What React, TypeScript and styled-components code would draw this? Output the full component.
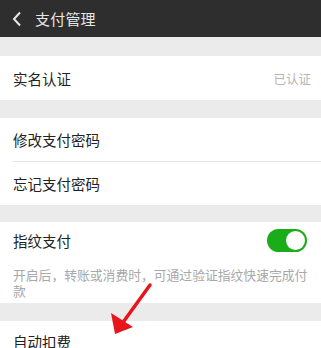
import React, { useState } from "react";
import styled, { createGlobalStyle } from "styled-components";

const Global = createGlobalStyle`
  html, body { margin: 0; padding: 0; background: #ebebeb; }
  body { font-family: "Noto Sans CJK SC", "Noto Sans", sans-serif; }
  * { box-sizing: border-box; }
`;

const Page = styled.div`
  position: relative;
  width: 321px;
  height: 348px;
  overflow: hidden;
  background: #ebebeb;
  display: flex;
  flex-direction: column;
`;

const Header = styled.div`
  height: 37px;
  background: #2e2e2e;
  display: flex;
  align-items: center;
  padding-left: 12px;
  gap: 13px;
  flex-shrink: 0;
`;

const Title = styled.span`
  color: #e6e6e6;
  font-size: 15px;
  letter-spacing: 0.2px;
`;

const Gap = styled.div<{ $h: number }>`
  height: ${(p) => p.$h}px;
  flex-shrink: 0;
`;

const Group = styled.div<{ $fill?: boolean }>`
  background: #ffffff;
  display: flex;
  flex-direction: column;
  flex: ${(p) => (p.$fill ? 1 : "none")};
`;

const Row = styled.div<{ $h: number; $sep?: boolean }>`
  height: ${(p) => p.$h}px;
  display: flex;
  align-items: center;
  justify-content: space-between;
  margin-left: 13px;
  padding-right: 10px;
  border-top: ${(p) => (p.$sep ? "1px solid #e3e3e3" : "none")};
  flex-shrink: 0;
`;

const Label = styled.span`
  color: #222222;
  font-size: 14.5px;
`;

const Value = styled.span`
  color: #b5b5b5;
  font-size: 12.5px;
`;

const Desc = styled.div`
  padding: 9px 10px 4px 13px;
  color: #a8a8a8;
  font-size: 12.8px;
  line-height: 16px;
`;

const Toggle = styled.button<{ $on: boolean }>`
  width: 40px;
  height: 23px;
  border-radius: 12px;
  border: none;
  padding: 2px;
  background: ${(p) => (p.$on ? "#1aad19" : "#dddddd")};
  display: flex;
  justify-content: ${(p) => (p.$on ? "flex-end" : "flex-start")};
  margin-right: 4px;
  cursor: pointer;
`;

const Knob = styled.span`
  width: 19px;
  height: 19px;
  border-radius: 50%;
  background: #ffffff;
`;

const Arrow = styled.svg`
  position: absolute;
  left: 0;
  top: 0;
  pointer-events: none;
`;

export default function App() {
  const [on, setOn] = useState(true);
  return (
    <>
      <Global />
      <Page>
        <Header>
          <svg width="10" height="16" viewBox="0 0 10 16">
            <path d="M8 1.5 L2 8 L8 14.5" fill="none" stroke="#e6e6e6" strokeWidth="2" />
          </svg>
          <Title>支付管理</Title>
        </Header>
        <Gap $h={19} />
        <Group>
          <Row $h={44}>
            <Label>实名认证</Label>
            <Value>已认证</Value>
          </Row>
        </Group>
        <Gap $h={18} />
        <Group>
          <Row $h={43}>
            <Label>修改支付密码</Label>
          </Row>
          <Row $h={44} $sep>
            <Label>忘记支付密码</Label>
          </Row>
        </Group>
        <Gap $h={17} />
        <Group>
          <Row $h={36}>
            <Label>指纹支付</Label>
            <Toggle $on={on} onClick={() => setOn(!on)}>
              <Knob />
            </Toggle>
          </Row>
          <Desc>开启后，转账或消费时，可通过验证指纹快速完成付款</Desc>
        </Group>
        <Gap $h={18} />
        <Group $fill>
          <Row $h={40}>
            <Label>自动扣费</Label>
          </Row>
        </Group>
        <Arrow width="321" height="348" viewBox="0 0 321 348">
          <line x1="150" y1="285" x2="124" y2="321" stroke="#e8161c" strokeWidth="3.5" strokeLinecap="round" />
          <polygon points="115,334 111,313 133,327" fill="#e8161c" />
        </Arrow>
      </Page>
    </>
  );
}
